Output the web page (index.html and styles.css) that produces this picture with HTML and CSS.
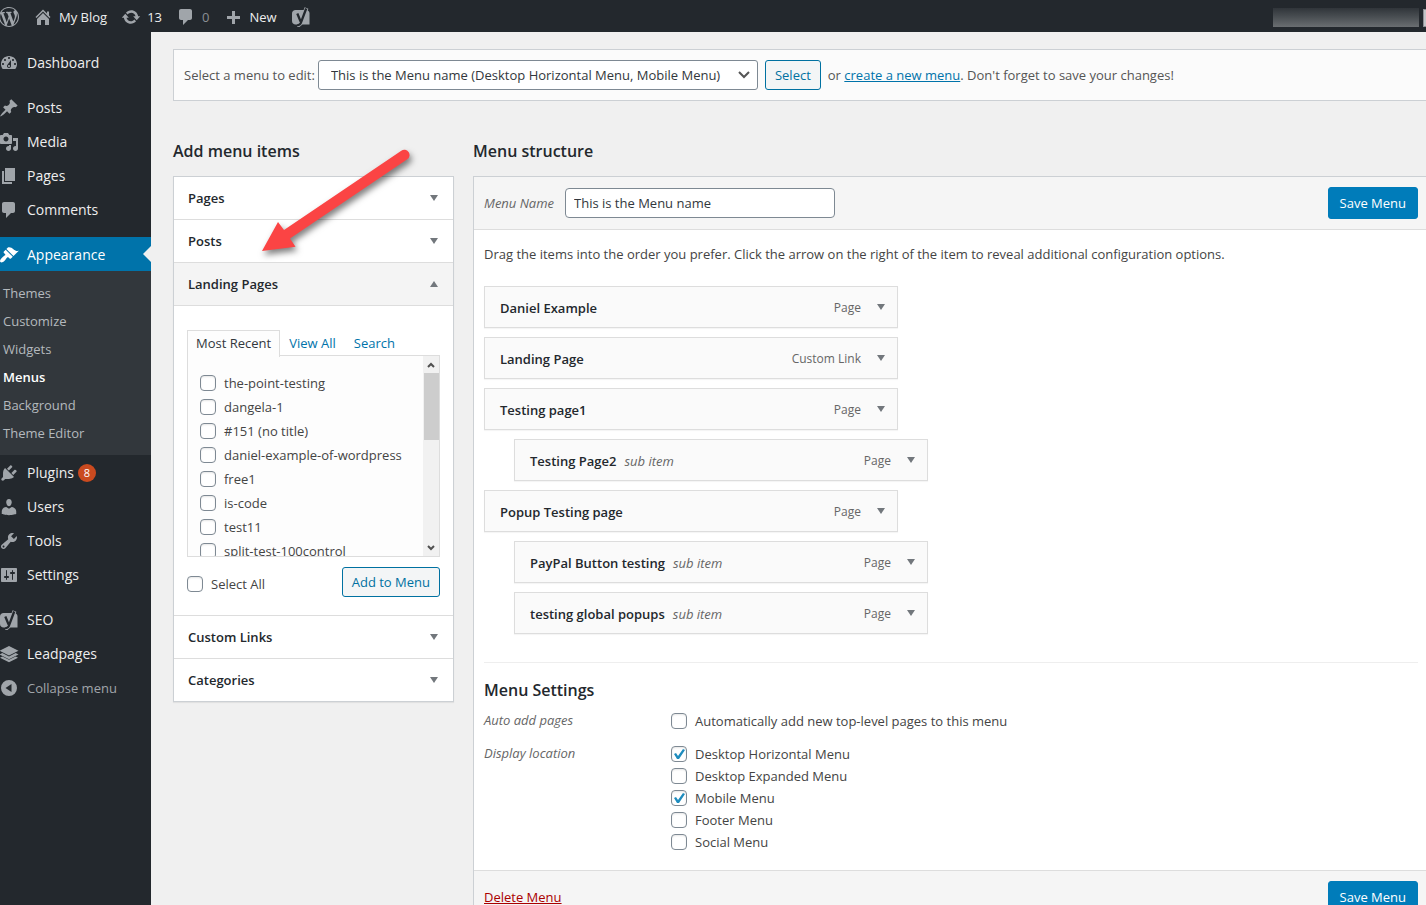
FILE: index.html
```
<!DOCTYPE html>
<html lang="en">
<head>
<meta charset="utf-8">
<meta name="viewport" content="width=device-width, initial-scale=1">
<title>Menus - My Blog</title>
<link rel="stylesheet" href="styles.css">
</head>
<body>
<svg class="sprite" aria-hidden="true">
  <symbol id="i-wordpress" viewBox="0 0 20 20"><path d="M20 10c0-5.51-4.49-10-10-10C4.48 0 0 4.49 0 10c0 5.52 4.48 10 10 10 5.51 0 10-4.48 10-10zM7.78 15.37L4.37 6.22c.55-.02 1.17-.08 1.17-.08.5-.06.44-1.13-.06-1.11 0 0-1.45.11-2.37.11-.18 0-.37 0-.58-.01C4.12 2.69 6.87 1.11 10 1.11c2.33 0 4.45.87 6.05 2.34-.68-.11-1.65.39-1.65 1.58 0 .74.45 1.36.9 2.1.35.61.55 1.36.55 2.46 0 1.49-1.4 5-1.4 5l-3.03-8.37c.54-.02.82-.17.82-.17.5-.05.44-1.25-.06-1.22 0 0-1.44.12-2.38.12-.87 0-2.33-.12-2.33-.12-.5-.03-.56 1.2-.06 1.22l.92.08 1.26 3.41zM17.41 10c.24-.64.74-1.87.43-4.25.7 1.29 1.05 2.71 1.05 4.25 0 3.29-1.73 6.24-4.4 7.78.97-2.59 1.94-5.2 2.92-7.78zM6.1 18.09C3.12 16.65 1.11 13.53 1.11 10c0-1.3.23-2.48.72-3.59C3.25 10.3 4.67 14.2 6.1 18.09zm4.03-6.63l2.58 6.98c-.86.29-1.76.45-2.71.45-.79 0-1.57-.11-2.29-.33.81-2.38 1.62-4.74 2.42-7.1z"/></symbol>
  <symbol id="i-home" viewBox="0 0 20 20"><path d="M16 8.5l1.53 1.53-1.06 1.06L10 4.6l-6.47 6.49-1.06-1.06L10 2.5l4 4v-2h2v4zm-6-2.46l6 5.99V18h-4v-5H8v5H4v-5.97z"/></symbol>
  <symbol id="i-update" viewBox="0 0 20 20"><path d="M10.2 3.28c3.53 0 6.43 2.61 6.92 6h2.08l-3.5 4-3.5-4h2.32c-.45-1.97-2.21-3.45-4.32-3.45-1.45 0-2.73.71-3.54 1.78L4.95 5.66C6.23 4.2 8.11 3.28 10.2 3.28zm-.4 13.44c-3.52 0-6.43-2.61-6.92-6H.8l3.5-4 3.5 4H5.48c.45 1.97 2.21 3.45 4.32 3.45 1.45 0 2.73-.71 3.54-1.78l1.71 1.95c-1.28 1.46-3.15 2.38-5.25 2.38z"/></symbol>
  <symbol id="i-comments" viewBox="0 0 20 20"><path d="M5 2h9c1.1 0 2 .9 2 2v7c0 1.1-.9 2-2 2h-2l-5 5v-5H5c-1.1 0-2-.9-2-2V4c0-1.1.9-2 2-2z"/></symbol>
  <symbol id="i-plus" viewBox="0 0 20 20"><path d="M17 9v3h-5v5H9v-5H4V9h5V4h3v5z"/></symbol>
  <symbol id="i-yoast" viewBox="0 0 20 20"><path d="M4.500 3H15c2 0 3.500 1.500 3.500 3.500V17.500h-14C2.600 17.500 1 16 1 14V6.500C1 4.500 2.600 3 4.500 3z"/><g fill="none" stroke="currentColor" stroke-width="4"><path d="M15.500 1L10.500 14.500Q9 18.500 6 18.500"/></g><g fill="none" stroke="#23282d" stroke-width="2.300"><path d="M15.200 1.500L10.500 14.200Q9.300 18.300 6 18.300M6.300 6.500L9.600 14.500"/></g></symbol>
  <symbol id="i-dashboard" viewBox="0 0 20 20"><path d="M3.760 16h12.480c1.100-1.370 1.760-3.110 1.760-5 0-4.420-3.580-8-8-8s-8 3.580-8 8c0 1.890.66 3.630 1.760 5zM10 4c.55 0 1 .45 1 1s-.45 1-1 1-1-.45-1-1 .45-1 1-1zM6 6c.55 0 1 .45 1 1s-.45 1-1 1-1-.45-1-1 .45-1 1-1zm8 0c.55 0 1 .45 1 1s-.45 1-1 1-1-.45-1-1 .45-1 1-1zm-5.370 5.550L12 7v6c0 1.100-.9 2-2 2s-2-.9-2-2c0-.57.24-1.080.63-1.450zM4 10c.55 0 1 .45 1 1s-.45 1-1 1-1-.45-1-1 .45-1 1-1zm12 0c.55 0 1 .45 1 1s-.45 1-1 1-1-.45-1-1 .45-1 1-1zm-5 3c0-.55-.45-1-1-1s-1 .45-1 1 .45 1 1 1 1-.45 1-1z"/></symbol>
  <symbol id="i-post" viewBox="0 0 20 20"><path d="M10.440 3.020l1.820-1.820 6.360 6.350-1.830 1.820c-1.050-.68-2.480-.57-3.410.36l-.75.75c-.92.93-1.040 2.350-.35 3.410l-1.830 1.820-2.410-2.410-2.800 2.790c-.42.42-3.380 2.710-3.800 2.290s1.860-3.390 2.280-3.810l2.790-2.790L4.100 9.360l1.830-1.820c1.050.69 2.480.57 3.400-.36l.75-.75c.93-.92 1.050-2.350.36-3.410z"/></symbol>
  <symbol id="i-media" viewBox="0 0 20 20"><path d="M13 11V4c0-.55-.45-1-1-1h-1.670L9 1H5L3.670 3H2c-.55 0-1 .45-1 1v7c0 .55.45 1 1 1h10c.55 0 1-.45 1-1zM7 4.500c1.380 0 2.500 1.120 2.500 2.500S8.380 9.500 7 9.500 4.500 8.380 4.500 7 5.620 4.500 7 4.500zM14 6h5v10.500c0 1.380-1.120 2.500-2.500 2.500S14 17.880 14 16.500s1.120-2.500 2.500-2.500c.17 0 .34.02.5.05V9h-3V6zm-4 8.050V13h2v3.500c0 1.380-1.120 2.500-2.500 2.500S7 17.880 7 16.500 8.120 14 9.500 14c.17 0 .34.02.5.05z"/></symbol>
  <symbol id="i-page" viewBox="0 0 20 20"><path d="M6 15V2h10v13H6zm-1 1h8v2H3V5h2v11z"/></symbol>
  <symbol id="i-appearance" viewBox="0 0 20 20"><path d="M14.480 11.060L7.410 3.990l1.500-1.500c.5-.56 2.300-.47 3.510.32 1.210.8 1.430 1.280 2.910 2.100 1.180.64 2.450 1.260 4.450.85zm-.71.71L6.700 4.700 4.930 6.470c-.39.39-.39 1.020 0 1.410l1.060 1.060c.39.39.39 1.030 0 1.420-.6.6-1.430 1.110-2.210 1.690-.35.26-.7.53-1.010.84C1.430 14.230.4 16.080 1.400 17.070c.99 1 2.840-.03 4.180-1.360.31-.31.58-.66.85-1.020.57-.78 1.080-1.610 1.690-2.210.39-.39 1.020-.39 1.410 0l1.060 1.060c.39.39 1.020.39 1.410 0z"/></symbol>
  <symbol id="i-plugins" viewBox="0 0 20 20"><path d="M13.110 4.360L9.870 7.600 8 5.730l3.240-3.240c.35-.34 1.050-.2 1.560.32.52.51.66 1.210.31 1.550zm-8 1.770l.91-1.120 9.010 9.010-1.190.84c-.71.71-2.630 1.160-3.820 1.160H6.140L4.900 17.260c-.59.59-1.540.59-2.120 0-.59-.58-.59-1.530 0-2.120l1.240-1.240v-3.880c0-1.130.4-3.190 1.090-3.890zm7.260 3.970l3.240-3.240c.34-.35 1.040-.21 1.550.31.52.51.66 1.210.31 1.550l-3.240 3.250z"/></symbol>
  <symbol id="i-users" viewBox="0 0 20 20"><path d="M10 9.250c-2.270 0-2.730-3.440-2.730-3.440C7 4.020 7.820 2 9.970 2c2.160 0 2.980 2.020 2.710 3.810 0 0-.41 3.440-2.680 3.440zm0 2.570L12.720 10c2.390 0 4.520 2.330 4.520 4.530v2.490s-3.650 1.130-7.240 1.130c-3.650 0-7.240-1.130-7.240-1.130v-2.490c0-2.250 1.940-4.480 4.470-4.480z"/></symbol>
  <symbol id="i-tools" viewBox="0 0 20 20"><path d="M16.680 9.770c-1.340 1.340-3.300 1.670-4.950.99l-5.410 6.520c-.99.99-2.590.99-3.580 0s-.99-2.590 0-3.570l6.520-5.420c-.68-1.650-.35-3.610.99-4.950 1.280-1.280 3.120-1.620 4.720-1.060l-2.890 2.890 2.820 2.820 2.860-2.870c.53 1.580.18 3.390-1.080 4.650zM3.810 16.210c.4.39 1.040.39 1.430 0 .4-.4.4-1.040 0-1.430-.39-.4-1.030-.4-1.430 0-.39.39-.39 1.030 0 1.430z"/></symbol>
  <symbol id="i-settings" viewBox="0 0 20 20"><path d="M18 16V4c0-.55-.45-1-1-1H3c-.55 0-1 .45-1 1v12c0 .55.45 1 1 1h14c.55 0 1-.45 1-1zM8 11h1c.55 0 1 .45 1 1s-.45 1-1 1H8v1.500c0 .28-.22.5-.5.5s-.5-.22-.5-.5V13H6c-.55 0-1-.45-1-1s.45-1 1-1h1V5.500c0-.28.22-.5.5-.5s.5.22.5.5V11zm5-2h-1c-.55 0-1-.45-1-1s.45-1 1-1h1V5.500c0-.28.22-.5.5-.5s.5.22.5.5V7h1c.55 0 1 .45 1 1s-.45 1-1 1h-1v5.500c0 .28-.22.5-.5.5s-.5-.22-.5-.5V9z"/></symbol>
  <symbol id="i-leadpages" viewBox="0 0 20 20"><path d="M10 2l9.500 4.700L10 11.400.5 6.700zM3.300 9.100l6.700 3.300 6.700-3.300 2.800 1.400L10 15.200.5 10.500zM3.300 12.500l6.700 3.300 6.700-3.300 2.300 1.200-9 4.500-9-4.500z"/></symbol>
  <symbol id="i-collapse" viewBox="0 0 20 20"><path fill-rule="evenodd" d="M10 2a8 8 0 1 0 0 16 8 8 0 0 0 0-16zm2.500 4v8L6.500 10z"/></symbol>
</svg>

<div class="app">
  <header class="topbar">
    <a class="top-link top-logo" href="#" aria-label="About WordPress"><svg class="icon"><use href="#i-wordpress"/></svg></a>
    <a class="top-link" href="#"><svg class="icon"><use href="#i-home"/></svg>My Blog</a>
    <a class="top-link" href="#"><svg class="icon"><use href="#i-update"/></svg>13</a>
    <a class="top-link top-muted" href="#"><svg class="icon"><use href="#i-comments"/></svg>0</a>
    <a class="top-link" href="#"><svg class="icon"><use href="#i-plus"/></svg>New</a>
    <a class="top-link" href="#" aria-label="Yoast SEO"><svg class="icon"><use href="#i-yoast"/></svg></a>
    <div class="account"><span class="account-name"></span><span class="avatar"></span></div>
  </header>

  <nav class="sidebar" aria-label="Main menu">
    <ul class="nav">
      <li><a class="nav-link" href="#"><svg class="icon"><use href="#i-dashboard"/></svg>Dashboard</a></li>
      <li class="nav-gap"><a class="nav-link" href="#"><svg class="icon"><use href="#i-post"/></svg>Posts</a></li>
      <li><a class="nav-link" href="#"><svg class="icon"><use href="#i-media"/></svg>Media</a></li>
      <li><a class="nav-link" href="#"><svg class="icon"><use href="#i-page"/></svg>Pages</a></li>
      <li><a class="nav-link" href="#"><svg class="icon"><use href="#i-comments"/></svg>Comments</a></li>
      <li class="nav-gap"><a class="nav-link nav-current" href="#"><svg class="icon"><use href="#i-appearance"/></svg>Appearance</a>
        <ul class="subnav">
          <li><a class="subnav-link" href="#">Themes</a></li>
          <li><a class="subnav-link" href="#">Customize</a></li>
          <li><a class="subnav-link" href="#">Widgets</a></li>
          <li><a class="subnav-link subnav-current" href="#">Menus</a></li>
          <li><a class="subnav-link" href="#">Background</a></li>
          <li><a class="subnav-link" href="#">Theme Editor</a></li>
        </ul>
      </li>
      <li><a class="nav-link" href="#"><svg class="icon"><use href="#i-plugins"/></svg>Plugins <span class="count">8</span></a></li>
      <li><a class="nav-link" href="#"><svg class="icon"><use href="#i-users"/></svg>Users</a></li>
      <li><a class="nav-link" href="#"><svg class="icon"><use href="#i-tools"/></svg>Tools</a></li>
      <li><a class="nav-link" href="#"><svg class="icon"><use href="#i-settings"/></svg>Settings</a></li>
      <li class="nav-gap"><a class="nav-link" href="#"><svg class="icon"><use href="#i-yoast"/></svg>SEO</a></li>
      <li><a class="nav-link" href="#"><svg class="icon"><use href="#i-leadpages"/></svg>Leadpages</a></li>
      <li><button class="nav-link nav-collapse" type="button"><svg class="icon"><use href="#i-collapse"/></svg>Collapse menu</button></li>
    </ul>
  </nav>

  <main class="content">
    <form class="manage">
      <label class="manage-label" for="menu-select">Select a menu to edit:</label>
      <span class="select-wrap">
        <select class="select" id="menu-select"><option>This is the Menu name (Desktop Horizontal Menu, Mobile Menu)</option></select>
        <svg class="select-chevron" viewBox="0 0 12 8"><path d="M1 1l5 5 5-5"/></svg>
      </span>
      <button class="button" type="button">Select</button>
      <span class="manage-note">or <a class="link" href="#">create a new menu</a>. Don't forget to save your changes!</span>
    </form>

    <div class="columns">
      <section class="add-items">
        <h2 class="title">Add menu items</h2>
        <div class="accordion">
          <button class="acc-head" type="button">Pages<span class="caret"></span></button>
          <button class="acc-head" type="button">Posts<span class="caret"></span></button>
          <button class="acc-head acc-open" type="button" aria-expanded="true">Landing Pages<span class="caret caret-up"></span></button>
          <div class="acc-body">
            <div class="tabs">
              <button class="tab tab-active" type="button">Most Recent</button>
              <button class="tab" type="button">View All</button>
              <button class="tab" type="button">Search</button>
            </div>
            <div class="picker">
              <div class="picker-list">
                <label class="check"><input type="checkbox">the-point-testing</label>
                <label class="check"><input type="checkbox">dangela-1</label>
                <label class="check"><input type="checkbox">#151 (no title)</label>
                <label class="check"><input type="checkbox">daniel-example-of-wordpress</label>
                <label class="check"><input type="checkbox">free1</label>
                <label class="check"><input type="checkbox">is-code</label>
                <label class="check"><input type="checkbox">test11</label>
                <label class="check"><input type="checkbox">split-test-100control</label>
              </div>
              <div class="scrollbar" aria-hidden="true">
                <svg class="scroll-arrow" viewBox="0 0 8 6"><path d="M1 5l3-3 3 3"/></svg>
                <span class="scroll-thumb"></span>
                <svg class="scroll-arrow scroll-down" viewBox="0 0 8 6"><path d="M1 1l3 3 3-3"/></svg>
              </div>
            </div>
            <div class="picker-actions">
              <label class="check"><input type="checkbox">Select All</label>
              <button class="button" type="button">Add to Menu</button>
            </div>
          </div>
          <button class="acc-head" type="button">Custom Links<span class="caret"></span></button>
          <button class="acc-head" type="button">Categories<span class="caret"></span></button>
        </div>
      </section>

      <section class="structure">
        <h2 class="title">Menu structure</h2>
        <form class="editor">
          <div class="editor-bar">
            <label class="hint" for="menu-name">Menu Name</label>
            <input class="input" id="menu-name" type="text" value="This is the Menu name">
            <button class="button button-primary" type="button">Save Menu</button>
          </div>
          <div class="editor-body">
            <p class="intro">Drag the items into the order you prefer. Click the arrow on the right of the item to reveal additional configuration options.</p>
            <ul class="items">
              <li class="item"><span class="item-title">Daniel Example</span><span class="item-type">Page</span><span class="caret"></span></li>
              <li class="item"><span class="item-title">Landing Page</span><span class="item-type">Custom Link</span><span class="caret"></span></li>
              <li class="item"><span class="item-title">Testing page1</span><span class="item-type">Page</span><span class="caret"></span></li>
              <li class="item item-sub"><span class="item-title">Testing Page2</span><em class="item-note">sub item</em><span class="item-type">Page</span><span class="caret"></span></li>
              <li class="item"><span class="item-title">Popup Testing page</span><span class="item-type">Page</span><span class="caret"></span></li>
              <li class="item item-sub"><span class="item-title">PayPal Button testing</span><em class="item-note">sub item</em><span class="item-type">Page</span><span class="caret"></span></li>
              <li class="item item-sub"><span class="item-title">testing global popups</span><em class="item-note">sub item</em><span class="item-type">Page</span><span class="caret"></span></li>
            </ul>
            <div class="settings">
              <h3 class="title settings-title">Menu Settings</h3>
              <div class="setting">
                <span class="hint">Auto add pages</span>
                <div class="options">
                  <label class="check"><input type="checkbox">Automatically add new top-level pages to this menu</label>
                </div>
              </div>
              <div class="setting">
                <span class="hint">Display location</span>
                <div class="options">
                  <label class="check"><input type="checkbox" checked>Desktop Horizontal Menu</label>
                  <label class="check"><input type="checkbox">Desktop Expanded Menu</label>
                  <label class="check"><input type="checkbox" checked>Mobile Menu</label>
                  <label class="check"><input type="checkbox">Footer Menu</label>
                  <label class="check"><input type="checkbox">Social Menu</label>
                </div>
              </div>
            </div>
          </div>
          <div class="editor-bar editor-foot">
            <a class="link link-delete" href="#">Delete Menu</a>
            <button class="button button-primary" type="button">Save Menu</button>
          </div>
        </form>
      </section>
    </div>
  </main>

  <svg class="pointer" viewBox="0 0 160 116" aria-hidden="true"><path d="M6 105L22 76l6 8L145.300 4.700a5.200 5.200 0 0 1 6 8.600L34 92.500l5.500 8.200z"/></svg>
</div>
</body>
</html>
```

FILE: styles.css
```
* { box-sizing: border-box; }

body {
  margin: 0;
  background: #f0f0f0;
  color: #444;
  font: 13px/20px "Open Sans", "Noto Sans", sans-serif;
}

button, input, select { font: inherit; color: inherit; margin: 0; }
ul { list-style: none; margin: 0; padding: 0; }
a { text-decoration: none; }
.sprite { display: none; }

.app {
  position: relative;
  display: grid;
  grid-template: 32px 1fr / 151px minmax(0, 1fr);
  height: 100vh;
  overflow: hidden;
}

.icon { flex: none; width: 20px; height: 20px; fill: currentColor; color: #a0a5aa; }

/* Top bar */
.topbar {
  grid-column: 1 / -1;
  display: flex;
  align-items: center;
  gap: 14px;
  background: #23282d;
}
.top-link { display: flex; align-items: center; gap: 6px; padding-top: 1px; color: #eee; }
.top-logo { margin-left: -1px; }
.top-muted { color: #8a8f94; }
.account { display: flex; align-items: center; gap: 4px; margin-left: auto; padding-top: 3px; }
.account-name { width: 146px; height: 19px; background: linear-gradient(#30353a, #4b5054 50%, #6a6e71); }
.avatar { width: 3px; height: 18px; background: #c3c4c7; border: solid #8c8f94; border-width: 1px 0 1px 1px; }

/* Sidebar */
.sidebar { background: #23282d; padding-top: 13px; }
.nav-gap { margin-top: 11px; }
.nav-link {
  position: relative;
  display: flex;
  align-items: center;
  gap: 8px;
  width: 100%;
  height: 34px;
  padding: 1px 0 0;
  color: #eee;
  background: none;
  border: 0;
  font-size: 14px;
}
.nav-link .icon { margin-left: -1px; }
.nav-current { background: #0073aa; color: #fff; }
.nav-current .icon { color: #fff; }
.nav-current::after {
  content: "";
  position: absolute;
  right: 0;
  top: 9px;
  border: 8px solid transparent;
  border-right-color: #f0f0f0;
  border-left-width: 0;
}
.nav-collapse { color: #a0a5aa; font-size: 13px; }
.count {
  width: 18px;
  height: 18px;
  margin-left: -4px;
  border-radius: 9px;
  background: #ca4a1f;
  color: #fff;
  font-size: 11px;
  line-height: 18px;
  text-align: center;
}
.subnav { padding: 8px 0; background: #32373c; }
.subnav-link { display: block; padding: 4px 3px; color: #b4b9be; }
.subnav-current { color: #fff; font-weight: 600; }

/* Menu chooser */
.content { padding: 17px 0 0 22px; }
.manage {
  display: flex;
  align-items: center;
  gap: 7px;
  height: 52px;
  padding: 0 10px;
  border: 1px solid #ccd0d4;
  border-right: 0;
  background: #fbfbfb;
  color: #555;
  white-space: nowrap;
}
.manage-label { margin-right: -4px; }
.select-wrap { position: relative; display: flex; }
.select {
  appearance: none;
  width: 440px;
  height: 30px;
  padding: 0 24px 0 12px;
  border: 1px solid #7e8993;
  border-radius: 3px;
  background: #fff;
  color: #32373c;
}
.select-chevron {
  position: absolute;
  right: 8px;
  top: 11px;
  width: 12px;
  height: 8px;
  fill: none;
  stroke: #555;
  stroke-width: 2;
  pointer-events: none;
}
.button {
  height: 30px;
  padding: 0 9px;
  border: 1px solid #0071a1;
  border-radius: 3px;
  background: #f3f5f6;
  color: #0071a1;
  white-space: nowrap;
}
.button-primary { height: 32px; padding: 0 11px; border-color: #007cba; background: #007cba; color: #fff; }
.link { color: #0073aa; text-decoration: underline; }
.link-delete { color: #a00; }

/* Columns */
.columns { display: grid; grid-template-columns: 281px minmax(0, 1fr); gap: 19px; margin-top: 39px; }
.title { margin: 0 0 14px; color: #23282d; font-size: 16px; line-height: 22px; font-weight: 600; }

.caret { flex: none; width: 8px; height: 6px; margin-right: 1px; background: #72777c; clip-path: polygon(0 0, 100% 0, 50% 100%); }
.caret-up { clip-path: polygon(0 100%, 100% 100%, 50% 0); }

.accordion { border: 1px solid #ccd0d4; background: #fff; box-shadow: 0 1px 1px rgba(0, 0, 0, .06); }
.acc-head {
  display: flex;
  align-items: center;
  justify-content: space-between;
  width: 100%;
  height: 43px;
  padding: 0 14px;
  border: 0;
  border-bottom: 1px solid #ddd;
  background: #fff;
  color: #23282d;
  font-weight: 600;
}
.acc-head:last-child { height: 42px; border-bottom: 0; }
.acc-open { background: #f4f4f4; }
.acc-body { padding: 24px 13px 18px; border-bottom: 1px solid #ddd; }

.tabs { display: flex; }
.tab { height: 26px; padding: 0 8px 1px; border: 1px solid transparent; border-bottom: 0; background: none; color: #0073aa; }
.tab-active { position: relative; z-index: 1; margin-bottom: -1px; height: 27px; padding-bottom: 2px; border-color: #ddd; background: #fdfdfd; color: #32373c; }

.picker { display: flex; height: 202px; margin-top: -1px; border: 1px solid #ddd; background: #fdfdfd; }
.picker-list { flex: 1; display: grid; align-content: start; gap: 4px; padding: 17px 12px 0; overflow: hidden; }
.scrollbar { display: flex; flex-direction: column; align-items: center; width: 16px; background: #f1f1f1; }
.scroll-arrow { width: 8px; height: 6px; margin: 6px 0 5px; fill: none; stroke: #505050; stroke-width: 2; }
.scroll-down { margin-top: auto; }
.scroll-thumb { width: 15px; height: 67px; background: #cdcdcd; }
.picker-actions { display: flex; justify-content: space-between; align-items: center; margin-top: 10px; }
.picker-actions .check { padding-top: 3px; }

.check { display: flex; align-items: center; gap: 8px; white-space: nowrap; }
.check input {
  appearance: none;
  flex: none;
  width: 16px;
  height: 16px;
  border: 1px solid #7e8993;
  border-radius: 4px;
  background: #fff;
  box-shadow: inset 0 1px 2px rgba(0, 0, 0, .1);
}
.check input:checked::before {
  content: "";
  display: block;
  width: 14px;
  height: 14px;
  background: #1e8cbe;
  clip-path: polygon(11px 2px, 13px 3px, 7px 12px, 5px 12px, 2px 7px, 4px 6px, 6px 9px);
}

/* Menu editor */
.editor { border: solid #ccd0d4; border-width: 1px 0 0 1px; background: #fff; }
.editor-bar {
  display: flex;
  align-items: center;
  gap: 11px;
  height: 53px;
  padding: 0 8px 0 10px;
  border-bottom: 1px solid #ddd;
  background: #f5f5f5;
}
.editor-bar .button { margin-left: auto; }
.editor-foot { border-top: 1px solid #ddd; }
.hint { color: #666; font-style: italic; }
.input { width: 270px; height: 30px; padding: 0 8px; border: 1px solid #7e8993; border-radius: 4px; background: #fff; color: #32373c; }
.editor-body { padding: 14px 8px 18px 10px; }
.intro { margin: 0 0 22px; }

.items { display: grid; gap: 9px; }
.item {
  display: flex;
  align-items: center;
  width: 414px;
  height: 42px;
  padding: 0 11px 0 15px;
  border: 1px solid #ddd;
  background: #fafafa;
  box-shadow: 0 1px 1px rgba(0, 0, 0, .04);
}
.item-sub { margin-left: 30px; }
.item-title, .item-note, .item-type { padding-top: 2px; }
.item-title { color: #23282d; font-weight: 600; }
.item-note { margin-left: 8px; color: #666; }
.item-type { margin-left: auto; margin-right: 16px; color: #666; font-size: 12px; }

.settings { display: grid; gap: 12px; margin-top: 28px; padding-top: 16px; border-top: 1px solid #eee; }
.settings-title { margin: 0 0 -3px; }
.setting { display: grid; grid-template-columns: 187px minmax(0, 1fr); }
.options { display: grid; gap: 2px; padding-top: 1px; }

/* Pointer over the accordion */
.pointer {
  position: absolute;
  left: 256px;
  top: 146px;
  width: 160px;
  height: 116px;
  fill: #fb4444;
  filter: drop-shadow(2px 4px 3px rgba(0, 0, 0, .5));
}
```
